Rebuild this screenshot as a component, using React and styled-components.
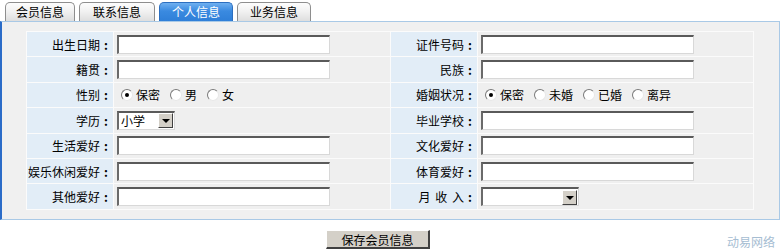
import React from 'react';
import styled, { createGlobalStyle } from 'styled-components';

const GlobalStyle = createGlobalStyle`
  body {
    margin: 0;
    background: #fff;
    font-family: "Noto Sans CJK SC", "Liberation Sans", sans-serif;
    font-size: 12px;
    color: #000;
  }
`;

const tabs = [
  { label: '会员信息', width: 70 },
  { label: '联系信息', width: 76 },
  { label: '个人信息', width: 74, active: true },
  { label: '业务信息', width: 74 },
];

const rows = [
  [
    { label: '出生日期', type: 'input' },
    { label: '证件号码', type: 'input' },
  ],
  [
    { label: '籍贯', type: 'input' },
    { label: '民族', type: 'input' },
  ],
  [
    { label: '性别', type: 'radio', options: ['保密', '男', '女'] },
    { label: '婚姻状况', type: 'radio', options: ['保密', '未婚', '已婚', '离异'] },
  ],
  [
    { label: '学历', type: 'select', value: '小学', width: 58 },
    { label: '毕业学校', type: 'input' },
  ],
  [
    { label: '生活爱好', type: 'input' },
    { label: '文化爱好', type: 'input' },
  ],
  [
    { label: '娱乐休闲爱好', type: 'input' },
    { label: '体育爱好', type: 'input' },
  ],
  [
    { label: '其他爱好', type: 'input' },
    { label: '月 收 入', type: 'select', value: '', width: 98, spaced: true },
  ],
];

const Field = ({ field }) => {
  if (field.type === 'input') return <TextBox type="text" />;
  if (field.type === 'radio') {
    return (
      <RadioGroup>
        {field.options.map((opt, i) => (
          <RadioItem key={opt}>
            <Radio $checked={i === 0} />
            {opt}
          </RadioItem>
        ))}
      </RadioGroup>
    );
  }
  return (
    <Select $width={field.width}>
      <SelectValue>{field.value}</SelectValue>
      <SelectArrow />
    </Select>
  );
};

const App = () => {
  return (
    <Page>
      <GlobalStyle />
      <TabBar>
        {tabs.map(t => (
          <Tab key={t.label} $width={t.width} $active={t.active}>{t.label}</Tab>
        ))}
      </TabBar>
      <Panel>
        <FormGrid>
          {rows.map(row =>
            row.map(field => (
              <React.Fragment key={field.label}>
                <LabelCell>
                  <LabelText $spaced={field.spaced}>{field.label}</LabelText>
                  <Colon>:</Colon>
                </LabelCell>
                <ValueCell><Field field={field} /></ValueCell>
              </React.Fragment>
            ))
          )}
        </FormGrid>
      </Panel>
      <Footer>
        <span />
        <SaveButton>保存会员信息</SaveButton>
        <Brand>动易网络</Brand>
      </Footer>
    </Page>
  );
};

export default App;

const Page = styled.div`
  width: 780px;
  height: 249px;
  overflow: hidden;
`;

const TabBar = styled.div`
  display: flex;
  align-items: flex-end;
  gap: 4px;
  height: 21px;
  padding-left: 5px;
  box-sizing: border-box;
`;

const Tab = styled.div`
  width: ${({ $width }) => $width}px;
  height: 19px;
  box-sizing: border-box;
  border: 1px solid ${({ $active }) => ($active ? '#2c6fc0' : '#8e8e8e')};
  border-bottom: none;
  border-radius: 5px 5px 0 0;
  background: ${({ $active }) =>
    $active
      ? 'linear-gradient(#6fb0f0, #3a8ae0 45%, #2f7fd8)'
      : 'linear-gradient(#fdfdfd, #f0f0f0 50%, #dedede)'};
  color: ${({ $active }) => ($active ? '#fff' : '#000')};
  font-size: 12px;
  line-height: 18px;
  text-align: center;
`;

const Panel = styled.div`
  height: 199px;
  box-sizing: border-box;
  border: 1px solid #a9c9e6;
  border-left: 2px solid #2b6cc8;
  background: #f0f0f0;
  padding: 9px 24px 0 24px;
`;

const FormGrid = styled.div`
  display: grid;
  grid-template-columns: 86px 276px 86px 275px;
  grid-auto-rows: 24.4px;
  gap: 1px;
  padding: 1px;
  background: #fbfbfb;
  width: max-content;
`;

const LabelCell = styled.div`
  display: flex;
  align-items: center;
  justify-content: flex-end;
  padding-right: 1px;
  background: #e2edf7;
  white-space: pre;
`;

const LabelText = styled.span`
  word-spacing: ${({ $spaced }) => ($spaced ? '2px' : '0')};
`;

const Colon = styled.span`
  width: 12px;
  text-align: center;
  font-weight: bold;
`;

const ValueCell = styled.div`
  display: flex;
  align-items: center;
  padding-left: 3px;
  background: #efefef;
`;

const TextBox = styled.input`
  width: 213px;
  height: 19px;
  box-sizing: border-box;
  margin: 0;
  padding: 0 2px;
  border-style: solid;
  border-width: 2px 1px 1px 2px;
  border-color: #5a5a5a #d8d8d8 #d8d8d8 #6a6a6a;
  background: #fff;
  font: inherit;
  outline: none;
`;

const RadioGroup = styled.div`
  display: flex;
  align-items: center;
  gap: 10px;
  padding-left: 4px;
`;

const RadioItem = styled.label`
  display: flex;
  align-items: center;
  gap: 3px;
`;

const Radio = styled.span`
  position: relative;
  width: 12px;
  height: 12px;
  box-sizing: border-box;
  border-radius: 50%;
  border: 1px solid;
  border-color: #7a7a7a #e8e8e8 #e8e8e8 #7a7a7a;
  background: #fff;

  &::after {
    content: '';
    display: ${({ $checked }) => ($checked ? 'block' : 'none')};
    position: absolute;
    left: 3px;
    top: 3px;
    width: 4px;
    height: 4px;
    border-radius: 50%;
    background: #000;
  }
`;

const Select = styled.div`
  display: flex;
  align-items: center;
  width: ${({ $width }) => $width}px;
  height: 19px;
  box-sizing: border-box;
  border-style: solid;
  border-width: 2px 1px 1px 2px;
  border-color: #5a5a5a #d8d8d8 #d8d8d8 #6a6a6a;
  background: #fff;
`;

const SelectValue = styled.span`
  flex: 1;
  padding-left: 2px;
  line-height: 15px;
`;

const SelectArrow = styled.span`
  position: relative;
  width: 15px;
  height: 15px;
  box-sizing: border-box;
  margin-right: 1px;
  background: #d4d0c8;
  border-style: solid;
  border-width: 1px;
  border-color: #fff #404040 #404040 #fff;

  &::after {
    content: '';
    position: absolute;
    left: 3px;
    top: 5px;
    border-left: 4px solid transparent;
    border-right: 4px solid transparent;
    border-top: 4px solid #000;
  }
`;

const Footer = styled.div`
  display: grid;
  grid-template-columns: 326px 104px 1fr;
  align-items: end;
  margin-top: 10px;
`;

const SaveButton = styled.button`
  width: 104px;
  height: 19px;
  box-sizing: border-box;
  margin: 0;
  padding: 0;
  border-style: solid;
  border-width: 1px 2px 2px 1px;
  border-color: #fff #404040 #404040 #fff;
  background: #d4d0c8;
  font: inherit;
  font-size: 12px;
  line-height: 15px;
  color: #000;
`;

const Brand = styled.span`
  justify-self: end;
  padding-right: 5px;
  margin-bottom: -1px;
  color: #a6bdd2;
  font-size: 12px;
`;
